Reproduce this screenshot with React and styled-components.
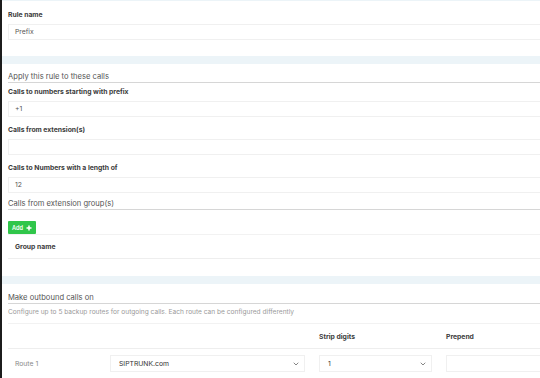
import React from "react";
import styled, { createGlobalStyle } from "styled-components";

const GlobalStyle = createGlobalStyle`
  html, body {
    margin: 0;
    padding: 0;
    background: #fff;
    overflow: hidden;
  }
  body {
    font-family: Inter, "Noto Sans", sans-serif;
    color: #444;
  }
`;

const Page = styled.div`
  width: 560px;
  min-height: 378px;
  border-left: 2px solid #1c1c1c;
  box-sizing: border-box;
`;

const Band = styled.div`
  height: ${(p) => p.h || 8}px;
  margin-top: ${(p) => p.mt || 0}px;
  background: #ecf4f8;
`;

const Section = styled.div`
  padding: ${(p) => p.pad || "0"};
  padding-left: 6px;
`;

const Heading = styled.div`
  font-size: 7.6px;
  line-height: 10px;
  color: #555;
  border-bottom: 1px solid #d6d6d6;
  margin-bottom: ${(p) => p.mb || 0}px;
`;

const Field = styled.div`
  display: flex;
  flex-direction: column;
  gap: 5px;
  margin-bottom: ${(p) => p.mb ?? 8}px;
`;

const Label = styled.label`
  font-size: 6.8px;
  line-height: 9px;
  font-weight: 700;
  color: #3b3b3b;
`;

const Input = styled.div`
  height: 16px;
  border: 1px solid #f0f0f0;
  box-sizing: border-box;
  padding: 0 6px;
  font-size: 6.8px;
  line-height: 14px;
  color: #555;
  display: flex;
  align-items: center;
`;

const AddButton = styled.button`
  display: flex;
  align-items: center;
  gap: 3px;
  height: 13px;
  width: 28px;
  padding: 0 0 0 4px;
  margin: 0;
  border: none;
  border-radius: 1px;
  background: #30c64a;
  color: #fff;
  font-family: Inter, sans-serif;
  font-size: 5.6px;
  font-weight: 600;
`;

const TableRow = styled.div`
  display: grid;
  grid-template-columns: ${(p) => p.cols};
  align-items: center;
  height: ${(p) => p.h}px;
  border-top: ${(p) => (p.top ? "1px solid #f2f2f2" : "none")};
  border-bottom: ${(p) => (p.bottom ? "1px solid #eeeeee" : "none")};
  box-sizing: border-box;
`;

const Cell = styled.div`
  padding: 0 7px;
  font-size: 6.8px;
  color: ${(p) => (p.muted ? "#8a8a8a" : "#3b3b3b")};
  font-weight: ${(p) => (p.bold ? 700 : 400)};
`;

const Description = styled.div`
  font-size: 6.6px;
  line-height: 9px;
  color: #9a9a9a;
  padding: 4px 0 6px;
  border-bottom: 1px solid #f2f2f2;
`;

const SelectBox = styled(Input)`
  height: 17px;
  justify-content: space-between;
  padding: 0 5px 0 8px;
  color: ${(p) => (p.dark ? "#333" : "#555")};
`;

const Chevron = () => (
  <svg width="6" height="4" viewBox="0 0 6 4" fill="none">
    <path d="M1 1l2 2 2-2" stroke="#777" strokeWidth="0.9" strokeLinecap="round" strokeLinejoin="round" />
  </svg>
);

const Plus = () => (
  <svg width="6" height="6" viewBox="0 0 6 6">
    <path d="M3 0.5v5M0.5 3h5" stroke="#fff" strokeWidth="1.5" />
  </svg>
);

const routeCols = "95px 209px 127px 127px";

export default function App() {
  return (
    <Page>
      <GlobalStyle />
      <Band h={1} />
      <Section pad="9px 0 16px">
        <Field mb={0}>
          <Label>Rule name</Label>
          <Input>Prefix</Input>
        </Field>
      </Section>
      <Band />
      <Section pad="8px 0 0">
        <Heading mb={4}>Apply this rule to these calls</Heading>
        <Field>
          <Label>Calls to numbers starting with prefix</Label>
          <Input>+1</Input>
        </Field>
        <Field>
          <Label>Calls from extension(s)</Label>
          <Input />
        </Field>
        <Field mb={6}>
          <Label>Calls to Numbers with a length of</Label>
          <Input>12</Input>
        </Field>
        <Heading mb={11}>Calls from extension group(s)</Heading>
        <AddButton>
          Add <Plus />
        </AddButton>
        <TableRow cols="1fr" h={25} top bottom>
          <Cell bold>Group name</Cell>
        </TableRow>
      </Section>
      <Band mt={17} />
      <Section pad="9px 0 0">
        <Heading>Make outbound calls on</Heading>
        <Description>
          Configure up to 5 backup routes for outgoing calls. Each route can be configured differently
        </Description>
        <TableRow cols={routeCols} h={25} bottom>
          <Cell />
          <Cell />
          <Cell bold>Strip digits</Cell>
          <Cell bold>Prepend</Cell>
        </TableRow>
        <TableRow cols={routeCols} h={29}>
          <Cell muted>Route 1</Cell>
          <Cell>
            <SelectBox dark>
              SIPTRUNK.com <Chevron />
            </SelectBox>
          </Cell>
          <Cell>
            <SelectBox dark>
              1 <Chevron />
            </SelectBox>
          </Cell>
          <Cell>
            <SelectBox />
          </Cell>
        </TableRow>
      </Section>
    </Page>
  );
}
